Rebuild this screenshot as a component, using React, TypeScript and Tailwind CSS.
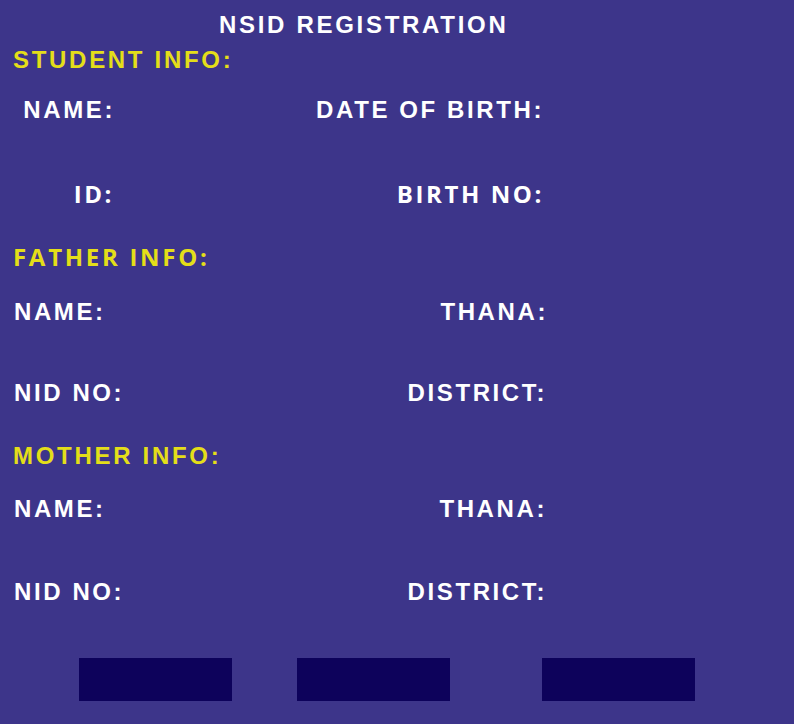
const arial = "font-['Liberation_Sans',Arial,sans-serif]";
const open = "font-['Open_Sans',sans-serif]";

function Label({ text, alt }: { text: string; alt?: boolean }) {
  return (
    <span className={`${alt ? open : arial} text-[24px] font-bold leading-[24px] tracking-[2.6px] text-white`}>
      {text}
    </span>
  );
}

function Heading({ text, alt, className }: { text: string; alt?: boolean; className: string }) {
  return (
    <h2
      className={`${alt ? open : arial} ${className} pl-[13px] text-[24px] font-bold leading-[24px] tracking-[2.7px] text-[#e4de19]`}
    >
      {text}
    </h2>
  );
}

export default function App() {
  return (
    <div className="min-h-screen w-full bg-[#3d358a]">
      <div className="flex flex-col pt-[13px] pb-[23px]">
        <h1 className={`${arial} pl-[219px] text-[24px] font-bold leading-[24px] tracking-[2.7px] text-white`}>
          NSID REGISTRATION
        </h1>

        <Heading text="STUDENT INFO:" className="mt-[11px]" />
        <div className="mt-[26px] flex w-[544px] justify-between">
          <div className="flex w-[115px] justify-end">
            <Label text="NAME:" />
          </div>
          <div className="pl-[4px]">
            <Label text="DATE OF BIRTH:" />
          </div>
        </div>
        <div className="mt-[58px] flex w-[544px] justify-between">
          <div className="flex w-[114px] justify-end">
            <Label text="ID:" alt />
          </div>
          <Label text="BIRTH NO:" alt />
        </div>

        <Heading text="FATHER INFO:" alt className="mt-[39px]" />
        <div className="mt-[31px] flex w-[548px] justify-between pl-[14px]">
          <Label text="NAME:" />
          <Label text="THANA:" />
        </div>
        <div className="mt-[57px] flex w-[547px] justify-between pl-[14px]">
          <Label text="NID NO:" />
          <Label text="DISTRICT:" />
        </div>

        <Heading text="MOTHER INFO:" className="mt-[39px]" />
        <div className="mt-[29px] flex w-[547px] justify-between pl-[14px]">
          <Label text="NAME:" />
          <Label text="THANA:" />
        </div>
        <div className="mt-[59px] flex w-[547px] justify-between pl-[14px]">
          <Label text="NID NO:" />
          <Label text="DISTRICT:" />
        </div>

        <div className="mt-[54px] flex pl-[79px]">
          <button className="h-[43px] w-[153px] bg-[#0d025b]" />
          <button className="ml-[65px] h-[43px] w-[153px] bg-[#0d025b]" />
          <button className="ml-[92px] h-[43px] w-[153px] bg-[#0d025b]" />
        </div>
      </div>
    </div>
  );
}
